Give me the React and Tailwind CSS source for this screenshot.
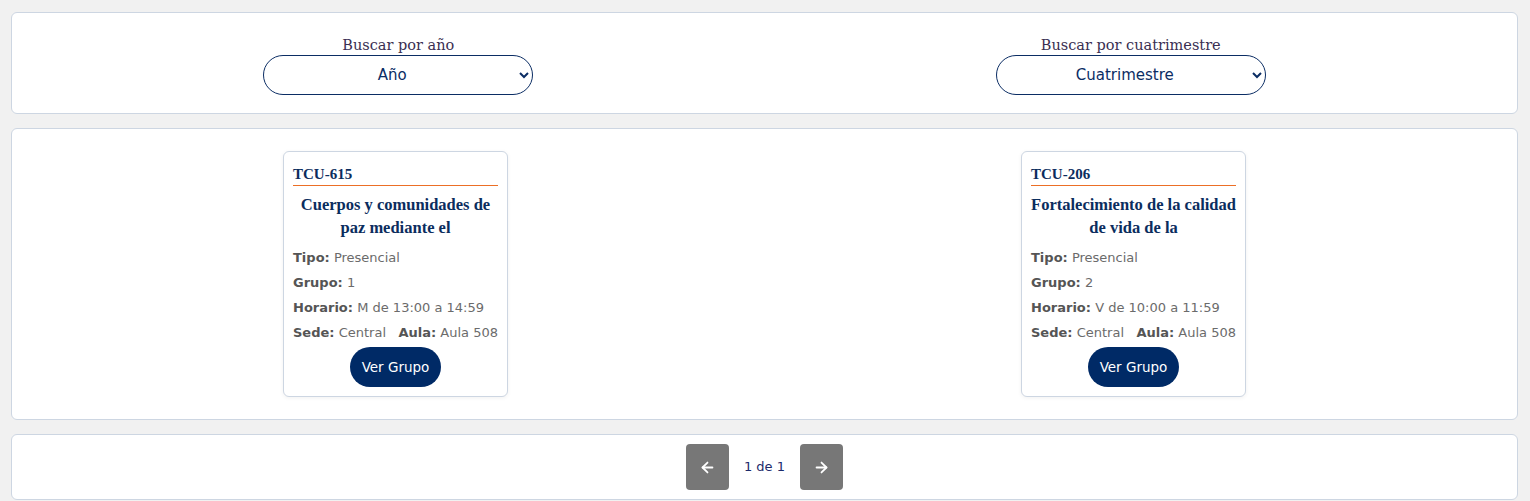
import { ArrowLeft, ArrowRight } from 'lucide-react'

const sans = 'font-["DejaVu_Sans",sans-serif]'
const serif = 'font-["Liberation_Serif",serif]'

const grupos = [
  {
    codigo: 'TCU-615',
    nombre: 'Cuerpos y comunidades de paz mediante el',
    tipo: 'Presencial',
    grupo: '1',
    horario: 'M de 13:00 a 14:59',
    sede: 'Central',
    aula: 'Aula 508',
  },
  {
    codigo: 'TCU-206',
    nombre: 'Fortalecimiento de la calidad de vida de la',
    tipo: 'Presencial',
    grupo: '2',
    horario: 'V de 10:00 a 11:59',
    sede: 'Central',
    aula: 'Aula 508',
  },
]

function Filtro({ label, placeholder }) {
  return (
    <div className="flex flex-col items-center">
      <label className={`font-["DejaVu_Serif",serif] text-[14.5px] leading-[20px] text-[#3a2f52]`}>{label}</label>
      <select
        className={`${sans} w-[270px] h-10 rounded-full border border-[#0b2d64] bg-white px-2 text-[15px] text-[#0b2d64] [text-align-last:center]`}
        defaultValue=""
      >
        <option value="">{placeholder}</option>
      </select>
    </div>
  )
}

function Dato({ label, value }) {
  return (
    <p className="leading-[25px]">
      <span className="font-bold text-[#555]">{label}:</span>{' '}
      <span className="text-[#6b6b6b]">{value}</span>
    </p>
  )
}

function GrupoCard({ g }) {
  return (
    <div className="w-[225px] rounded-md border border-[#cdd6e2] bg-white px-[9px] pt-[11px] pb-[9px] shadow-[0_1px_4px_rgba(0,0,0,0.06)]">
      <h3 className={`${serif} font-bold text-[15px] leading-[22px] text-[#0b2d5e]`}>{g.codigo}</h3>
      <div className="h-px bg-[#ec6f26]" />
      <h2 className={`${serif} font-bold text-[16.5px] leading-[23px] text-[#0b2d5e] text-center mt-[7px] mb-[6px]`}>
        {g.nombre}
      </h2>
      <div className={`${sans} text-[13px]`}>
        <Dato label="Tipo" value={g.tipo} />
        <Dato label="Grupo" value={g.grupo} />
        <Dato label="Horario" value={g.horario} />
        <div className="flex justify-between">
          <Dato label="Sede" value={g.sede} />
          <Dato label="Aula" value={g.aula} />
        </div>
      </div>
      <div className="flex justify-center mt-[2px]">
        <button className={`${sans} h-10 w-[91px] rounded-full bg-[#002a66] text-white text-[13.5px]`}>
          Ver Grupo
        </button>
      </div>
    </div>
  )
}

export default function App() {
  return (
    <div className="min-h-screen bg-[#f1f1f1] pl-[11px] pr-[12px] pt-3 flex flex-col gap-[14px]">
      <section className="rounded-md border border-[#cdd6e2] bg-white px-5 pt-[22px] pb-[18px] grid grid-cols-2">
        <Filtro label="Buscar por año" placeholder="Año" />
        <Filtro label="Buscar por cuatrimestre" placeholder="Cuatrimestre" />
      </section>

      <section className="rounded-md border border-[#cdd6e2] bg-white px-5 py-[22px] grid grid-cols-2 gap-[11px] justify-items-center">
        {grupos.map((g) => (
          <GrupoCard key={g.codigo} g={g} />
        ))}
      </section>

      <section className="rounded-md border border-[#cdd6e2] bg-white py-[9px] flex items-center justify-center gap-[15px]">
        <button className="w-[43px] h-[46px] rounded bg-[#777] flex items-center justify-center text-white">
          <ArrowLeft size={17} strokeWidth={2.5} />
        </button>
        <span className={`${sans} text-[13px] text-[#1c2a6b]`}>1 de 1</span>
        <button className="w-[43px] h-[46px] rounded bg-[#777] flex items-center justify-center text-white">
          <ArrowRight size={17} strokeWidth={2.5} />
        </button>
      </section>
    </div>
  )
}
